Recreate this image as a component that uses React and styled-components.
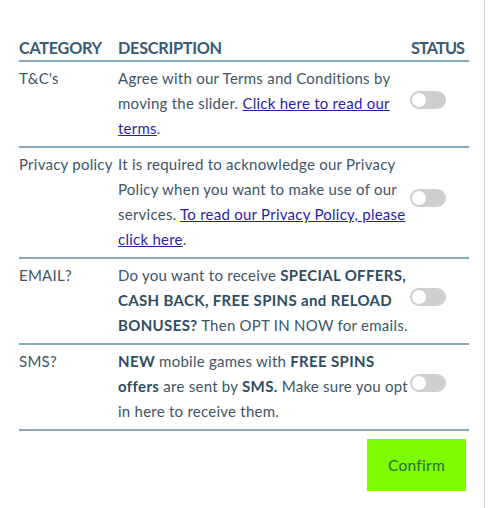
import React from "react";
import styled, { createGlobalStyle } from "styled-components";

const Global = createGlobalStyle`
  html, body { margin: 0; padding: 0; background: #fff; }
  body { font-family: Lato, "Open Sans", sans-serif; }
`;

const Panel = styled.div`
  width: 485px;
  height: 508px;
  box-sizing: border-box;
  border-right: 1px solid #d4d4d4;
  padding: 35px 0 0 19px;
  background: #fff;
`;

const Table = styled.table`
  width: 447px;
  border-collapse: collapse;
  table-layout: fixed;
  color: #3e5567;
  font-size: 15px;
  line-height: 25px;
  letter-spacing: 0.25px;
`;

const HeadCell = styled.th`
  text-align: left;
  font-weight: 700;
  font-size: 16.3px;
  letter-spacing: ${(p) => p.$ls || "-0.3px"};
  color: #3a5a72;
  padding: 0 1px 0 0;
  border-bottom: 2px solid #8aa8ba;
  width: ${(p) => p.$w};
  white-space: nowrap;
`;

const Cell = styled.td`
  padding: 4px 1px 5px 0;
  vertical-align: ${(p) => (p.$middle ? "middle" : "top")};
  border-bottom: 2px solid #8aa8ba;
`;

const Link = styled.a`
  color: #2b1fa8;
  text-decoration: underline;
`;

const Strong = styled.b`
  font-weight: 700;
  color: #2f4d63;
  letter-spacing: 0.35px;
`;

const Toggle = styled.span`
  display: block;
  position: relative;
  width: 36px;
  height: 18px;
  margin-left: -1px;
  border-radius: 9px;
  background: #cfcfcf;
  margin-bottom: 8px;
  &::after {
    content: "";
    position: absolute;
    left: 2px;
    top: 2px;
    width: 14px;
    height: 14px;
    border-radius: 50%;
    background: #fff;
  }
`;

const Footer = styled.div`
  width: 447px;
  display: flex;
  justify-content: flex-end;
  padding-top: 8px;
`;

const Button = styled.button`
  width: 99px;
  height: 52px;
  border: none;
  background: #7dfc00;
  color: #2b6656;
  font-family: Lato, "Open Sans", sans-serif;
  font-size: 15.5px;
  letter-spacing: 0.3px;
  cursor: pointer;
`;

const rows = [
  {
    cat: "T&C's",
    desc: (
      <>
        Agree with our Terms and Conditions by moving the slider.{" "}
        <Link href="#">Click here to read our terms</Link>.
      </>
    ),
  },
  {
    cat: "Privacy policy",
    desc: (
      <>
        It is required to acknowledge our Privacy Policy when you want to make use of our services.{" "}
        <Link href="#">To read our Privacy Policy, please click here</Link>.
      </>
    ),
  },
  {
    cat: "EMAIL?",
    desc: (
      <>
        Do you want to receive <Strong>SPECIAL OFFERS, CASH BACK, FREE SPINS and RELOAD BONUSES?</Strong>{" "}
        Then OPT IN NOW for emails.
      </>
    ),
  },
  {
    cat: "SMS?",
    desc: (
      <>
        <Strong>NEW</Strong> mobile games with <Strong>FREE SPINS offers</Strong> are sent by{" "}
        <Strong>SMS.</Strong> Make sure you opt in here to receive them.
      </>
    ),
  },
];

export default function App() {
  return (
    <>
      <Global />
      <Panel>
        <Table>
          <thead>
            <tr>
              <HeadCell $w="98px">CATEGORY</HeadCell>
              <HeadCell $w="292px">DESCRIPTION</HeadCell>
              <HeadCell $w="57px" $ls="-0.9px">STATUS</HeadCell>
            </tr>
          </thead>
          <tbody>
            {rows.map((r) => (
              <tr key={r.cat}>
                <Cell>{r.cat}</Cell>
                <Cell>{r.desc}</Cell>
                <Cell $middle>
                  <Toggle />
                </Cell>
              </tr>
            ))}
          </tbody>
        </Table>
        <Footer>
          <Button>Confirm</Button>
        </Footer>
      </Panel>
    </>
  );
}
